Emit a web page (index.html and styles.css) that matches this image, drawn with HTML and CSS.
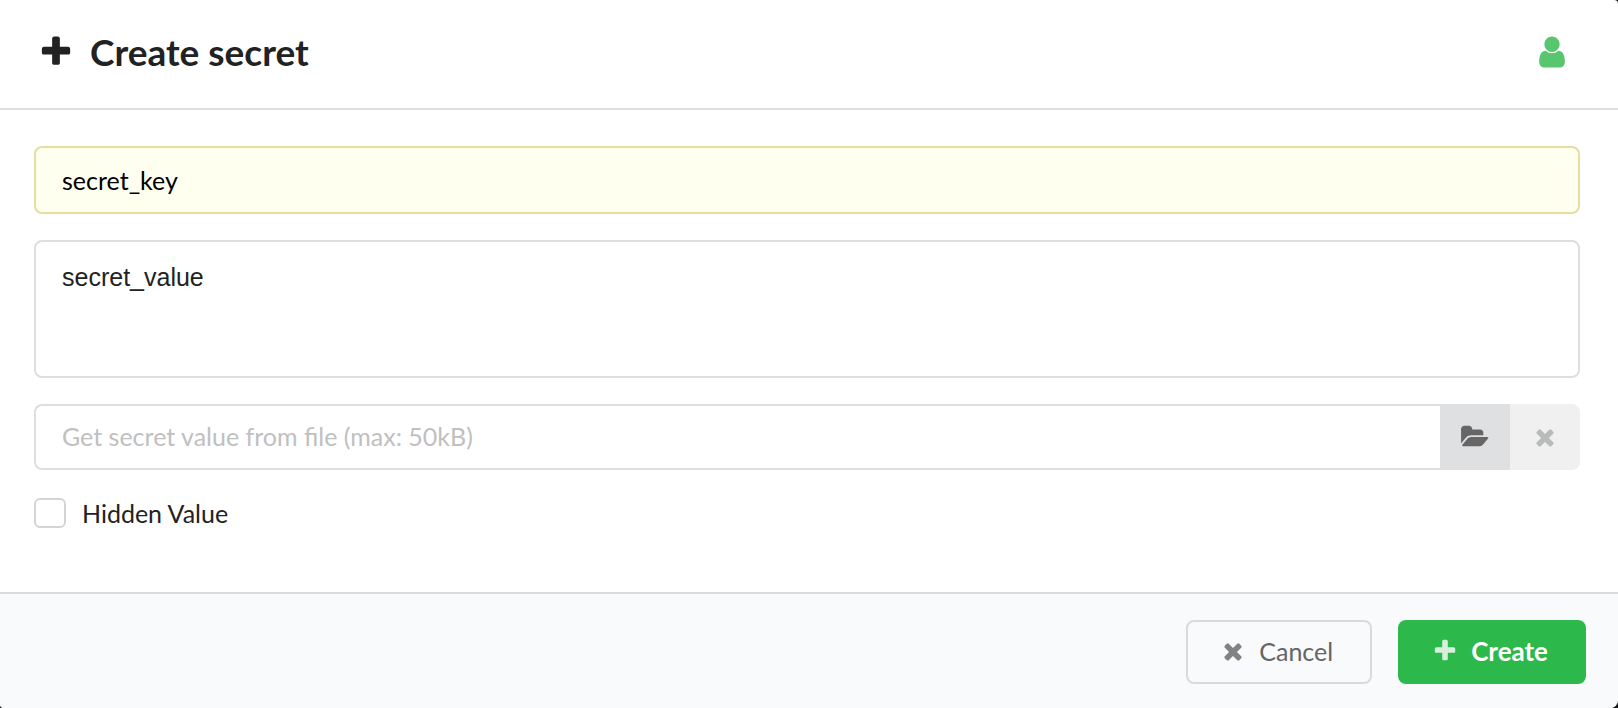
FILE: index.html
```
<!DOCTYPE html>
<html lang="en">
<head>
	<meta charset="utf-8">
	<title>Create secret</title>
	<link rel="stylesheet" href="styles.css">
</head>
<body>
	<form class="modal">
		<header class="header">
			<svg class="icon-large" viewBox="0 0 1792 1792"><path d="M1600 736v192q0 40-28 68t-68 28h-416v416q0 40-28 68t-68 28h-192q-40 0-68-28t-28-68v-416h-416q-40 0-68-28t-28-68v-192q0-40 28-68t68-28h416v-416q0-40 28-68t68-28h192q40 0 68 28t28 68v416h416q40 0 68 28t28 68z"/></svg>
			<h1>Create secret</h1>
			<svg class="icon-large user" viewBox="0 0 1792 1792"><path d="M1536 1399q0 109-62.5 187t-150.5 78h-854q-88 0-150.5-78t-62.5-187q0-85 8.5-160.5t31.5-152 58.5-131 94-89 134.5-34.5q131 128 313 128t313-128q76 0 134.5 34.5t94 89 58.5 131 31.5 152 8.5 160.5zm-256-887q0 159-112.5 271.5t-271.5 112.5-271.5-112.5-112.5-271.5 112.5-271.5 271.5-112.5 271.5 112.5 112.5 271.5z"/></svg>
		</header>

		<div class="content">
			<input type="text" class="field key" name="key" value="secret_key" aria-label="Secret key">
			<textarea class="field value" name="value" aria-label="Secret value">secret_value</textarea>

			<div class="file">
				<input type="text" class="field" placeholder="Get secret value from file (max: 50kB)" aria-label="Secret file" readonly>
				<button type="button" class="open" aria-label="Choose file">
					<svg class="icon-folder" viewBox="0 0 1920 1792"><path d="M1879 952q0 31-31 66l-336 396q-43 51-120.5 86.5t-143.5 35.5h-1088q-34 0-60.5-13t-26.5-43q0-31 31-66l336-396q43-51 120.5-86.5t143.5-35.5h1088q34 0 60.5 13t26.5 43zm-343-344v160h-832q-94 0-197 47.5t-164 119.5l-337 396-5 6q0-4-.5-12.5t-.5-12.5v-960q0-92 66-158t158-66h320q92 0 158 66t66 158v32h544q92 0 158 66t66 158z"/></svg>
				</button>
				<button type="button" class="clear" aria-label="Clear file" disabled>
					<svg class="icon" viewBox="0 0 1792 1792"><path d="M1490 1322q0 40-28 68l-136 136q-28 28-68 28t-68-28l-294-294-294 294q-28 28-68 28t-68-28l-136-136q-28-28-28-68t28-68l294-294-294-294q-28-28-28-68t28-68l136-136q28-28 68-28t68 28l294 294 294-294q28-28 68-28t68 28l136 136q28 28 28 68t-28 68l-294 294 294 294q28 28 28 68z"/></svg>
				</button>
			</div>

			<div class="check">
				<input type="checkbox" id="hidden" name="hidden">
				<label for="hidden">Hidden Value</label>
			</div>
		</div>

		<footer class="actions">
			<button type="button" class="button cancel">
				<svg class="icon" viewBox="0 0 1792 1792"><path d="M1490 1322q0 40-28 68l-136 136q-28 28-68 28t-68-28l-294-294-294 294q-28 28-68 28t-68-28l-136-136q-28-28-28-68t28-68l294-294-294-294q-28-28-28-68t28-68l136-136q28-28 68-28t68 28l294 294 294-294q28-28 68-28t68 28l136 136q28 28 28 68t-28 68l-294 294 294 294q28 28 28 68z"/></svg>
				Cancel
			</button>
			<button type="submit" class="button create">
				<svg class="icon" viewBox="0 0 1792 1792"><path d="M1600 736v192q0 40-28 68t-68 28h-416v416q0 40-28 68t-68 28h-192q-40 0-68-28t-28-68v-416h-416q-40 0-68-28t-28-68v-192q0-40 28-68t68-28h416v-416q0-40 28-68t68-28h192q40 0 68 28t28 68v416h416q40 0 68 28t28 68z"/></svg>
				Create
			</button>
		</footer>
	</form>
</body>
</html>
```
FILE: styles.css
```
* {
	box-sizing: border-box;
}

body {
	margin: 0;
	background: #1b1c1d;
	color: #222;
	font-family: Lato, sans-serif;
	font-size: 25px;
}

input, textarea, button {
	margin: 0;
	font: inherit;
	color: inherit;
}

svg {
	display: block;
	flex: none;
	fill: currentColor;
}

.modal {
	display: flex;
	flex-direction: column;
	min-height: 100vh;
	background: #fff;
	border-radius: 0 4px 8px 4px;
	overflow: hidden;
}

/* header */
.header {
	display: flex;
	align-items: center;
	padding: 28px 48px 32px 38px;
	border-bottom: 2px solid #dedede;
}

.header h1 {
	margin: 0 auto 0 16px;
	font-size: 37px;
	line-height: 48px;
}

.icon-large {
	width: 36px;
	height: 36px;
}

.user {
	color: #57c66f;
}

/* fields */
.content {
	flex: 1;
	display: flex;
	flex-direction: column;
	gap: 26px;
	padding: 36px 38px 62px 34px;
}

.field {
	display: block;
	width: 100%;
	height: 66px;
	padding: 0 26px 2px;
	border: 2px solid #dedede;
	border-radius: 8px;
	background: #fff;
	outline: none;
}

.key {
	height: 68px;
	padding: 0 26px;
	border-color: #e5dda1;
	background: #fffff0;
	color: #000;
}

.value {
	height: 138px;
	padding: 18px 26px;
	font-family: "Liberation Sans", sans-serif;
	line-height: 34px;
	resize: none;
}

.file {
	display: flex;
}

.file .field {
	flex: 1;
	min-width: 0;
	border-right: 0;
	border-radius: 8px 0 0 8px;
}

.file .field::placeholder {
	color: #c0c0c0;
	opacity: 1;
}

.file button {
	display: flex;
	align-items: center;
	justify-content: center;
	width: 70px;
	padding: 0;
	border: 0;
}

.open {
	background: #dfe0e1;
	color: #666;
}

.clear {
	border-radius: 0 8px 8px 0;
	background: #f0f0f0;
}

.file .clear {
	color: #b9bbba;
}

.icon {
	width: 26px;
	height: 26px;
}

.icon-folder {
	width: 28px;
	height: 26px;
}

.check {
	display: flex;
	align-items: center;
	gap: 16px;
	line-height: 34px;
}

.check input {
	appearance: none;
	width: 32px;
	height: 30px;
	border: 2px solid #d4d4d5;
	border-radius: 6px;
	background: #fff;
}

.check input:checked {
	background: #2db84b;
}

/* footer */
.actions {
	display: flex;
	justify-content: flex-end;
	gap: 26px;
	padding: 26px 32px 24px;
	border-top: 2px solid #d8dadc;
	background: #f9fafc;
}

.button {
	display: flex;
	align-items: center;
	gap: 13px;
	height: 64px;
	padding: 0 38px 2px 34px;
	border: 0;
	border-radius: 8px;
	cursor: pointer;
}

.button .icon {
	opacity: 0.8;
}

.cancel {
	padding: 0 37px 2px 32px;
	border: 2px solid #d8dadc;
	background: #f9fafc;
	color: #646566;
}

.create {
	background: #2db84b;
	color: #fff;
	font-size: 26px;
	font-weight: bold;
}
```
